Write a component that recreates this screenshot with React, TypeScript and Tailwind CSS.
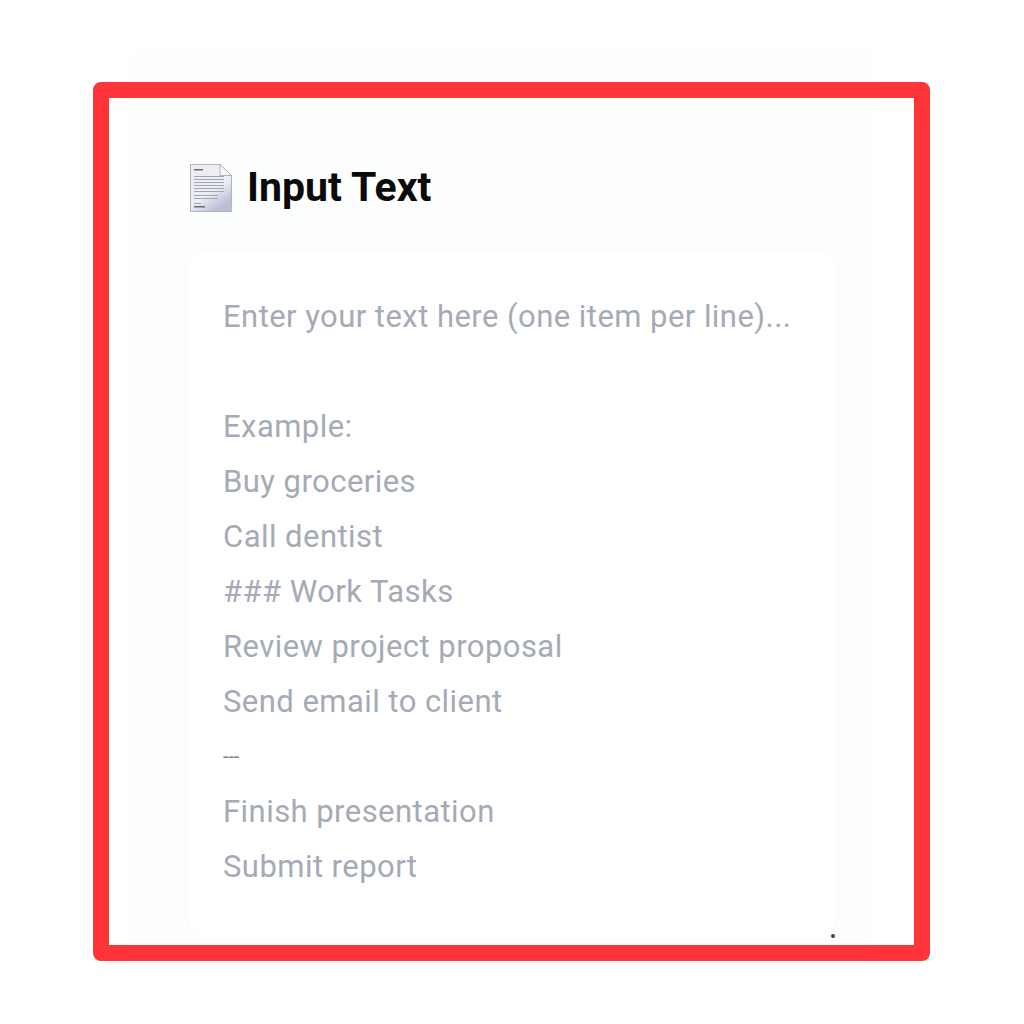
const lines = [
  "Enter your text here (one item per line)...",
  "",
  "Example:",
  "Buy groceries",
  "Call dentist",
  "### Work Tasks",
  "Review project proposal",
  "Send email to client",
  "---",
  "Finish presentation",
  "Submit report",
];

function DocIcon() {
  return (
    <svg width="44" height="50" viewBox="0 0 44 50" className="shrink-0 blur-[0.4px]">
      <defs>
        <linearGradient id="page" x1="0" y1="0" x2="0.6" y2="1">
          <stop offset="0" stopColor="#eeeeef" />
          <stop offset="0.65" stopColor="#eceef4" />
          <stop offset="1" stopColor="#bcbdd6" />
        </linearGradient>
      </defs>
      <path d="M1.5 1.5H31L42.5 12.5V48.5H1.5Z" fill="url(#page)" stroke="#b4b5bc" strokeWidth="1" />
      <path d="M31 1.5V12.5H42.5Z" fill="#f8f8f8" stroke="#b4b5bc" strokeWidth="1" />
      <rect x="5" y="6" width="9" height="1.5" fill="#6a6b74" />
      {[13, 16, 19, 22, 25, 28].map((y) => (
        <rect key={y} x="5" y={y} width="30" height="1" fill="#a3a5b0" />
      ))}
      {[32, 35].map((y) => (
        <rect key={y} x="5" y={y} width="24" height="1" fill="#a3a5b0" />
      ))}
      <rect x="5" y="40" width="7" height="1" fill="#a8a9b3" />
      <rect x="5" y="43" width="11" height="1.5" fill="#6a6b74" />
    </svg>
  );
}

export default function App() {
  return (
    <div className="relative h-[1024px] w-[1024px] overflow-hidden bg-white font-['Roboto',sans-serif]">
      <div className="ml-[126px] mt-[44px] h-[910px] w-[750px] rounded-[24px] bg-[#fdfefe] pl-[60px] pr-[38px] pt-[116px]">
        <div className="flex h-[56px] items-center gap-[14px] pl-[3px]">
          <DocIcon />
          <h1 className="-translate-y-px text-[41px] font-bold leading-[56px] text-[#0a0a0a]">Input Text</h1>
        </div>
        <div className="mt-[32px] h-[692px] w-[652px] rounded-[24px] border border-[#fafafa] bg-white pl-[36px] pt-[40px]">
          {lines.map((line, i) =>
            line === "---" ? (
              <div key={i} className="flex h-[55px] items-center text-[19.5px] leading-none text-[#7d818a]">
                {line}
              </div>
            ) : (
              <div key={i} className="h-[55px] whitespace-pre text-[31px] leading-[55px] tracking-[0.45px] text-[#a5abb6]">
                {line}
              </div>
            ),
          )}
        </div>
      </div>
      <div className="absolute left-[93px] top-[82px] h-[879px] w-[837px] rounded-[8px] border-[16px] border-[#fe3438]" />
      <div className="absolute left-[831px] top-[934px] h-[4px] w-[4px] rounded-full bg-[#3c4048]" />
    </div>
  );
}
